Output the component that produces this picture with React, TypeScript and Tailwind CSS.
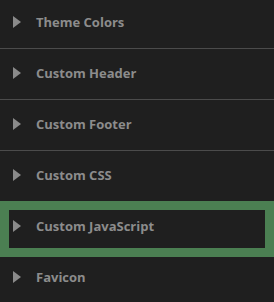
const items = [
  'Theme Colors',
  'Custom Header',
  'Custom Footer',
  'Custom CSS',
  'Custom JavaScript',
  'Favicon',
];

function Caret() {
  return (
    <svg width="8" height="12" viewBox="0 0 8 12" className="mb-[2px] shrink-0">
      <path d="M0 0 L8 6 L0 12 Z" fill="#8a8a8a" />
    </svg>
  );
}

export default function App() {
  return (
    <div className="relative h-[302px] w-[274px] overflow-hidden bg-[#1f1f1f] font-['Open_Sans',sans-serif]">
      <div className="-mt-[2px] flex flex-col">
        {items.map((label) => (
          <div
            key={label}
            className="flex h-[51px] items-center gap-[15px] border-b border-[#4b4b4b] pl-[13px]"
          >
            <Caret />
            <span className="text-[13px] font-bold text-[#8c8c8c]">{label}</span>
          </div>
        ))}
      </div>
      {/* focus highlight over Custom JavaScript */}
      <div className="pointer-events-none absolute left-0 right-0 top-[201px] h-[56px] border-[9px] border-[#4b7f52]" />
    </div>
  );
}
